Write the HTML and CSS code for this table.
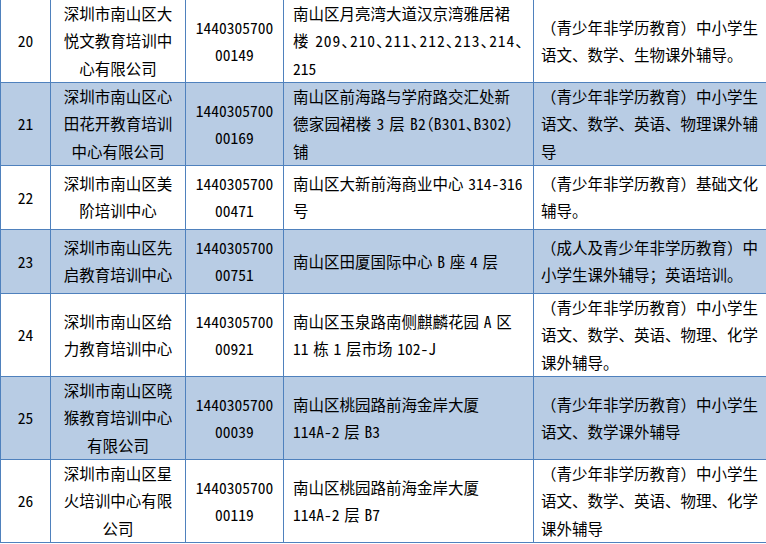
FILE: index.html
```html
<!DOCTYPE html>
<html lang="zh-CN">
<head>
<meta charset="utf-8">
<title>培训机构名单</title>
<link rel="stylesheet" href="styles.css">
</head>
<body>
<table class="grid">
  <colgroup>
    <col class="c-no">
    <col class="c-name">
    <col class="c-code">
    <col class="c-addr">
    <col class="c-scope">
  </colgroup>
  <tbody>
    <tr>
      <td class="no">20</td>
      <td class="name">深圳市南山区大<br>悦文教育培训中<br>心有限公司</td>
      <td class="code">1440305700<br>00149</td>
      <td class="addr">南山区月亮湾大道汉京湾雅居裙<br><span class="tight">楼 209、210、211、212、213、214、</span><br>215</td>
      <td class="scope">（青少年非学历教育）中小学生<br>语文、数学、生物课外辅导。</td>
    </tr>
    <tr class="alt">
      <td class="no">21</td>
      <td class="name">深圳市南山区心<br>田花开教育培训<br>中心有限公司</td>
      <td class="code">1440305700<br>00169</td>
      <td class="addr">南山区前海路与学府路交汇处新<br><span class="halt">德家园裙楼 3 层 B2（B301、B302）</span><br>铺</td>
      <td class="scope">（青少年非学历教育）中小学生<br>语文、数学、英语、物理课外辅<br>导</td>
    </tr>
    <tr>
      <td class="no">22</td>
      <td class="name">深圳市南山区美<br>阶培训中心</td>
      <td class="code">1440305700<br>00471</td>
      <td class="addr">南山区大新前海商业中心 314-316<br>号</td>
      <td class="scope">（青少年非学历教育）基础文化<br>辅导。</td>
    </tr>
    <tr class="alt">
      <td class="no">23</td>
      <td class="name">深圳市南山区先<br>启教育培训中心</td>
      <td class="code">1440305700<br>00751</td>
      <td class="addr">南山区田厦国际中心 B 座 4 层</td>
      <td class="scope">（成人及青少年非学历教育）中<br>小学生课外辅导；英语培训。</td>
    </tr>
    <tr>
      <td class="no">24</td>
      <td class="name">深圳市南山区给<br>力教育培训中心</td>
      <td class="code">1440305700<br>00921</td>
      <td class="addr">南山区玉泉路南侧麒麟花园 A 区<br>11 栋 1 层市场 102-J</td>
      <td class="scope">（青少年非学历教育）中小学生<br>语文、数学、英语、物理、化学<br>课外辅导。</td>
    </tr>
    <tr class="alt">
      <td class="no">25</td>
      <td class="name">深圳市南山区晓<br>猴教育培训中心<br>有限公司</td>
      <td class="code">1440305700<br>00039</td>
      <td class="addr">南山区桃园路前海金岸大厦<br>114A-2 层 B3</td>
      <td class="scope">（青少年非学历教育）中小学生<br>语文、数学课外辅导</td>
    </tr>
    <tr>
      <td class="no">26</td>
      <td class="name">深圳市南山区星<br>火培训中心有限<br>公司</td>
      <td class="code">1440305700<br>00119</td>
      <td class="addr">南山区桃园路前海金岸大厦<br>114A-2 层 B7</td>
      <td class="scope">（青少年非学历教育）中小学生<br>语文、数学、英语、物理、化学<br>课外辅导</td>
    </tr>
  </tbody>
</table>
</body>
</html>
```

FILE: styles.css
```css
html, body {
  margin: 0;
  padding: 0;
  background: #ffffff;
}

.grid {
  border-collapse: collapse;
  table-layout: fixed;
  width: 766px;
  font-family: "Noto Sans Mono CJK SC", "Noto Sans CJK SC", sans-serif;
  font-size: 15.5px;
  line-height: 27.33px;
  color: #000000;
}

.c-no { width: 50px; }
.c-name { width: 135px; }
.c-code { width: 98px; }
.c-addr { width: 250px; }
.c-scope { width: 233px; }

.grid td {
  border: 1px solid #4f81bd;
  padding: 0;
  height: 63px;
  vertical-align: middle;
  white-space: nowrap;
  overflow: hidden;
}

.grid tr:first-child td {
  border-top: none;
}

.grid tr.alt td {
  background: #b8cce4;
}

.no,
.name,
.code {
  text-align: center;
}

.addr {
  text-align: left;
  padding-left: 9px !important;
  word-spacing: -3px;
}

.scope {
  text-align: left;
  padding-left: 7px !important;
}

.halt {
  font-feature-settings: "halt" 1;
  letter-spacing: 0.2px;
}

.tight {
  font-feature-settings: "halt" 1;
  letter-spacing: 0.95px;
}
```
